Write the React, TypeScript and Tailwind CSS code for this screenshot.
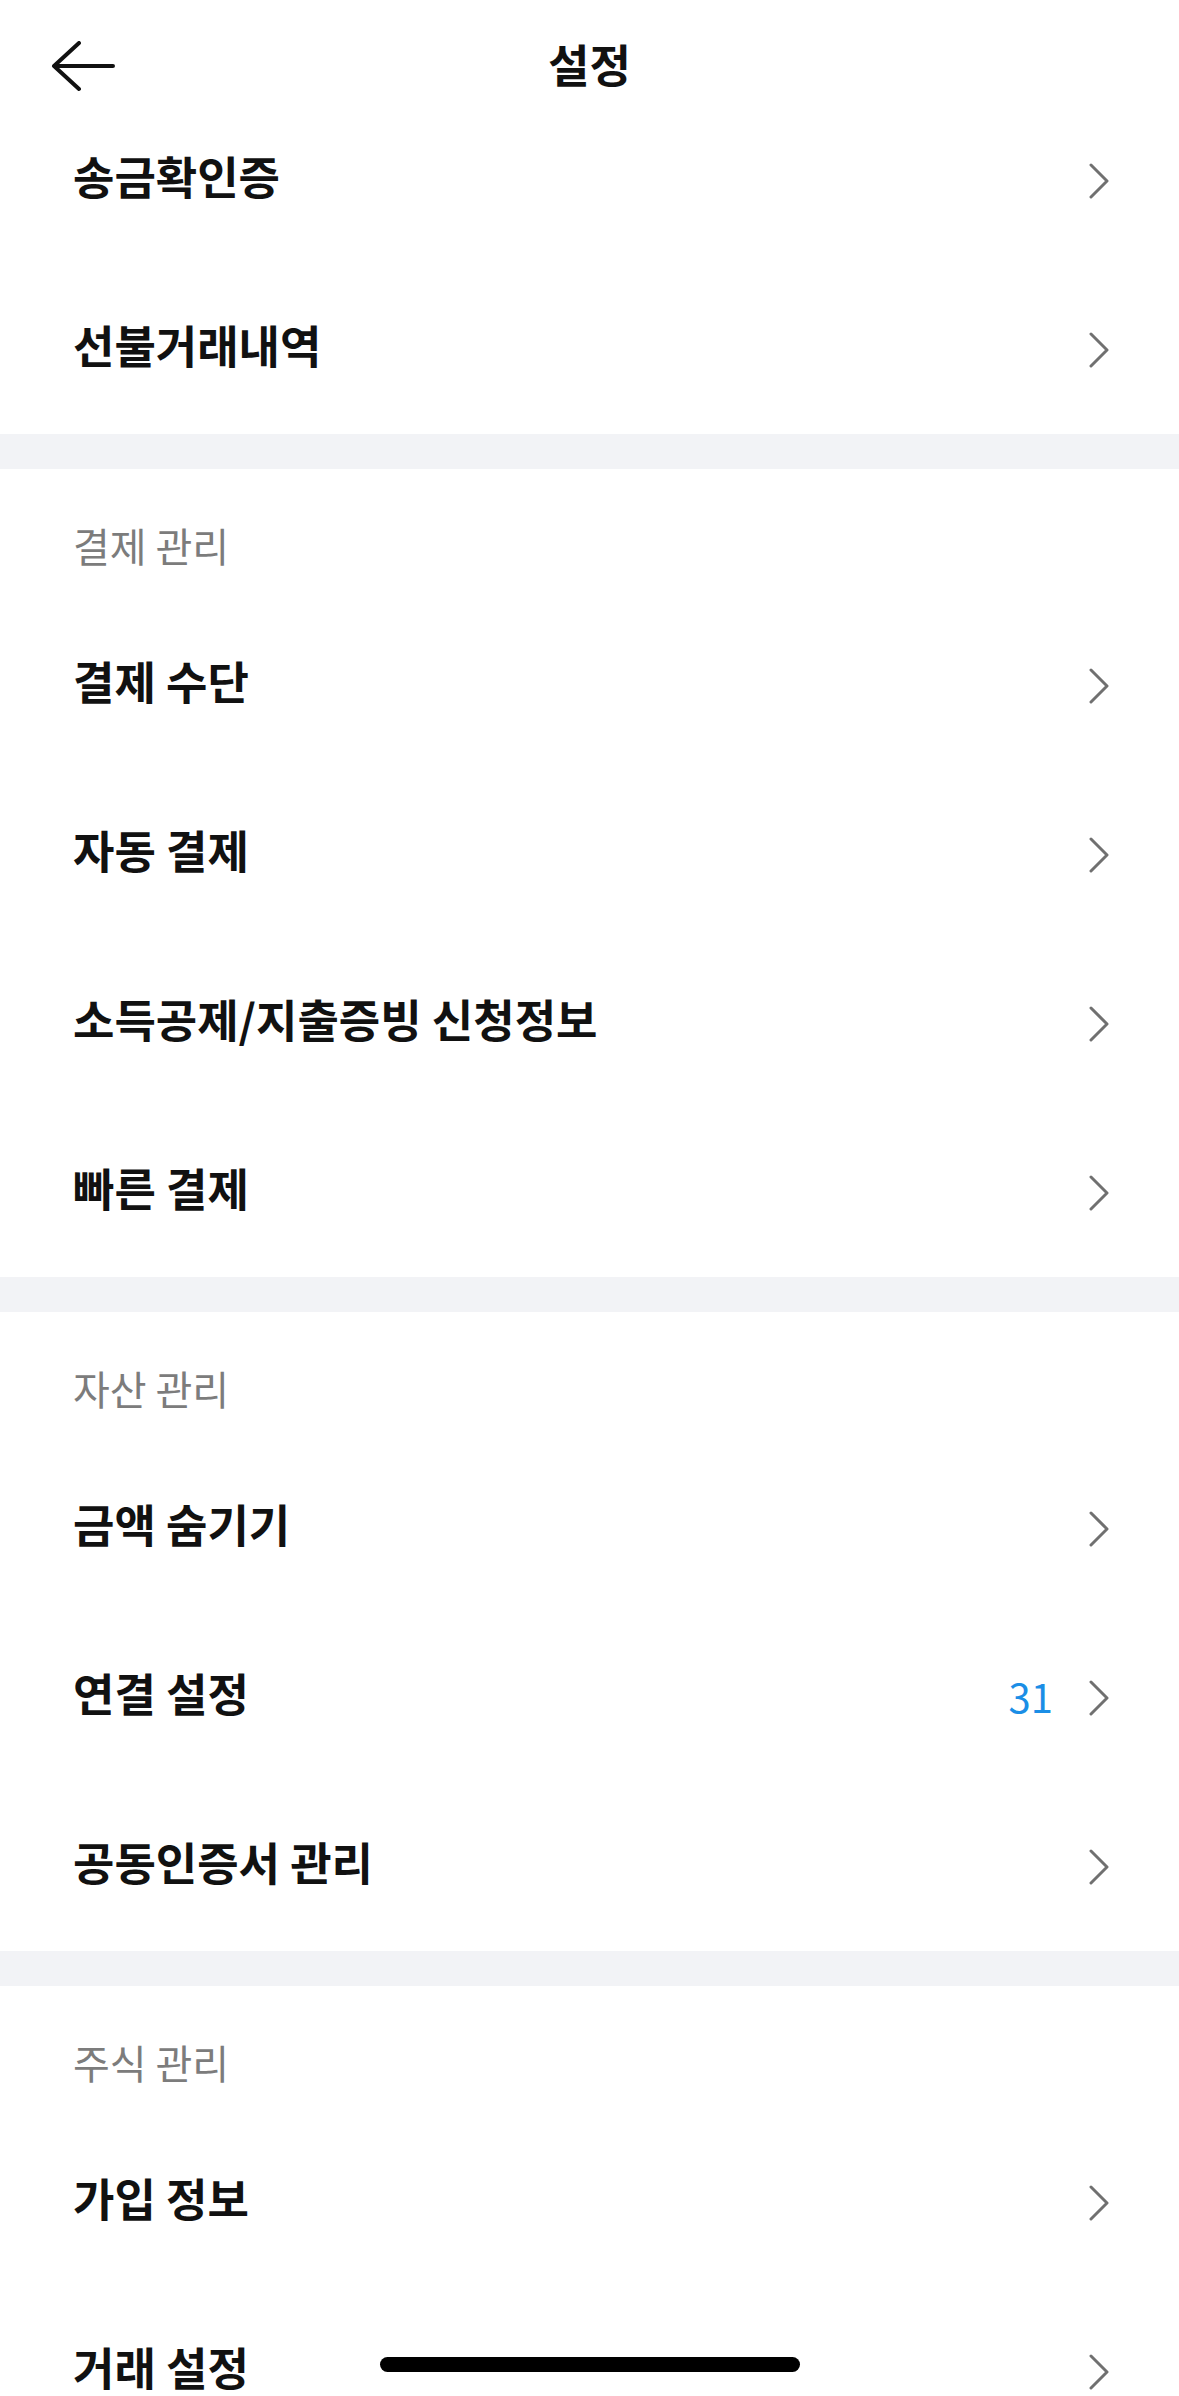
import { Fragment } from "react";

type Section = {
  title?: string;
  items: { label: string; badge?: string }[];
};

const sections: Section[] = [
  { items: [{ label: "송금확인증" }, { label: "선불거래내역" }] },
  {
    title: "결제 관리",
    items: [
      { label: "결제 수단" },
      { label: "자동 결제" },
      { label: "소득공제/지출증빙 신청정보" },
      { label: "빠른 결제" },
    ],
  },
  {
    title: "자산 관리",
    items: [{ label: "금액 숨기기" }, { label: "연결 설정", badge: "31" }, { label: "공동인증서 관리" }],
  },
  {
    title: "주식 관리",
    items: [{ label: "가입 정보" }, { label: "거래 설정" }],
  },
];

function Chevron() {
  return (
    <svg width="20" height="36" viewBox="0 0 20 36" fill="none">
      <path d="M2 2 L18 18 L2 34" stroke="#707070" strokeWidth="3" strokeLinecap="round" strokeLinejoin="round" />
    </svg>
  );
}

function BackArrow() {
  return (
    <svg width="64" height="52" viewBox="0 0 64 52" fill="none">
      <path d="M3 25 H62 M3 25 L28 2 M3 25 L28 48" stroke="#111" strokeWidth="4" strokeLinecap="round" strokeLinejoin="round" />
    </svg>
  );
}

export default function App() {
  return (
    <div
      className="relative w-[1179px] h-[2396px] overflow-hidden bg-white text-[#111]"
      style={{ fontFamily: '"Noto Sans CJK KR", "Noto Sans", sans-serif' }}
    >
      <header className="grid grid-cols-[1fr_auto_1fr] items-center h-[96px] pt-[36px] px-[51px]">
        <div className="flex items-center">
          <BackArrow />
        </div>
        <h1 className="text-[45px] leading-[56px] font-semibold pb-[6px]">설정</h1>
        <div />
      </header>

      {sections.map((s, i) => (
        <Fragment key={i}>
          {i > 0 && <div className="h-[35px] bg-[#f2f3f6]" />}
          {s.title && (
            <div className="h-[132px] px-[73px] pt-[54px] text-[40px] leading-[44px] text-[#7c7c7c]">
              {s.title}
            </div>
          )}
          {s.items.map((it) => (
            <div key={it.label} className="flex items-center justify-between h-[169px] pl-[73px] pr-[70px]">
              <span className="text-[45px] leading-[56px] font-semibold pb-[9px]">{it.label}</span>
              <div className="flex items-center gap-[36px]">
                {it.badge && <span className="text-[40px] leading-[48px] text-[#1b8ee6] pb-[4px]">{it.badge}</span>}
                <Chevron />
              </div>
            </div>
          ))}
        </Fragment>
      ))}

      <div className="absolute left-[380px] bottom-[24px] w-[420px] h-[15px] rounded-full bg-black" />
    </div>
  );
}
